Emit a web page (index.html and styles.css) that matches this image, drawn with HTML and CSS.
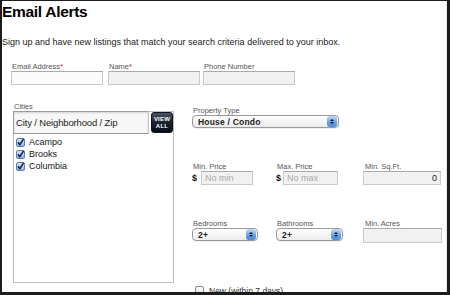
FILE: index.html
```html
<!DOCTYPE html>
<html>
<head>
<meta charset="utf-8">
<link rel="stylesheet" href="styles.css">
</head>
<body>
<div class="frame">
  <h1 class="title">Email Alerts</h1>
  <p class="intro">Sign up and have new listings that match your search criteria delivered to your inbox.</p>

  <div class="contact">
    <div class="field">
      <label class="lbl">Email Address<span class="req">*</span></label>
      <div class="input input-white"></div>
    </div>
    <div class="field">
      <label class="lbl">Name<span class="req">*</span></label>
      <div class="input"></div>
    </div>
    <div class="field">
      <label class="lbl">Phone Number</label>
      <div class="input"></div>
    </div>
  </div>

  <div class="search">
    <div class="cities">
      <label class="lbl">Cities</label>
      <div class="citybox">
        <div class="cityrow">
          <div class="cityinput">City / Neighborhood / Zip</div>
          <div class="viewall"><span>VIEW</span><span>ALL</span></div>
        </div>
        <ul class="citylist">
          <li><svg class="cb" viewBox="0 0 9 9"><defs><linearGradient id="g1" x1="0" y1="0" x2="0" y2="1"><stop offset="0" stop-color="#dbe8f8"/><stop offset="1" stop-color="#8fb3e3"/></linearGradient></defs><rect x="0.5" y="0.5" width="8" height="8" rx="1.5" fill="url(#g1)" stroke="#5d7fb3"/><path d="M2 4.3 L3.8 6.6 L7.6 0.8" fill="none" stroke="#14213a" stroke-width="1.5"/></svg>Acampo</li>
          <li><svg class="cb" viewBox="0 0 9 9"><rect x="0.5" y="0.5" width="8" height="8" rx="1.5" fill="url(#g1)" stroke="#5d7fb3"/><path d="M2 4.3 L3.8 6.6 L7.6 0.8" fill="none" stroke="#14213a" stroke-width="1.5"/></svg>Brooks</li>
          <li><svg class="cb" viewBox="0 0 9 9"><rect x="0.5" y="0.5" width="8" height="8" rx="1.5" fill="url(#g1)" stroke="#5d7fb3"/><path d="M2 4.3 L3.8 6.6 L7.6 0.8" fill="none" stroke="#14213a" stroke-width="1.5"/></svg>Columbia</li>
        </ul>
      </div>
    </div>

    <div class="filters">
      <div class="grid">
        <div class="field span2">
          <label class="lbl">Property Type</label>
          <div class="select sel-wide"><span class="selval">House / Condo</span><span class="stepper"><i class="up"></i><i class="down"></i></span></div>
        </div>
        <div class="field"></div>

        <div class="field">
          <label class="lbl">Min. Price</label>
          <div class="money"><span class="dollar">$</span><div class="input inp-min"><span class="ph">No min</span></div></div>
        </div>
        <div class="field">
          <label class="lbl">Max. Price</label>
          <div class="money"><span class="dollar">$</span><div class="input inp-max"><span class="ph">No max</span></div></div>
        </div>
        <div class="field">
          <label class="lbl">Min. Sq.Ft.</label>
          <div class="input inp-right"><span class="val">0</span></div>
        </div>

        <div class="field">
          <label class="lbl">Bedrooms</label>
          <div class="select sel-bed"><span class="selval">2+</span><span class="stepper"><i class="up"></i><i class="down"></i></span></div>
        </div>
        <div class="field">
          <label class="lbl">Bathrooms</label>
          <div class="select sel-bath"><span class="selval">2+</span><span class="stepper"><i class="up"></i><i class="down"></i></span></div>
        </div>
        <div class="field">
          <label class="lbl">Min. Acres</label>
          <div class="input inp-acres"></div>
        </div>
      </div>
      <div class="newrow"><span class="cb-empty"></span>New (within 7 days)</div>
    </div>
  </div>
</div>
</body>
</html>
```

FILE: styles.css
```css
* { box-sizing: border-box; }
html, body { margin: 0; padding: 0; background: #fff; }
body { font-family: "Liberation Sans", Arial, sans-serif; color: #111; }

.frame {
  width: 450px;
  height: 295px;
  border-style: solid;
  border-color: #1d1d1d;
  border-width: 1px 3px 3px 2px;
  overflow: hidden;
  position: relative;
  background: #fff;
  box-shadow: inset -1px 0 0 #e6e6e6;
}

.title {
  margin: 2px 0 0 0;
  font-size: 15.5px;
  line-height: 18px;
  font-weight: bold;
  color: #000;
  letter-spacing: -0.3px;
}

.intro {
  margin: 16px 0 0 0;
  font-size: 9px;
  line-height: 11px;
  color: #1a1a1a;
}

.lbl {
  display: block;
  font-size: 7.5px;
  line-height: 8px;
  color: #555;
  padding-left: 1px;
  white-space: nowrap;
}
.req { color: #c0282d; }

.input {
  height: 14px;
  border: 1px solid #c9c9c9;
  border-top-color: #a9a9a9;
  background: #f1f1f1;
  font-size: 9px;
  line-height: 12px;
  padding: 0 3px;
}
.input-white { background: #fbfbfb; }

.contact {
  margin-top: 15px;
  padding-left: 9px;
  display: grid;
  grid-template-columns: 97px 95px 95px;
}
.contact .input { width: 92px; }

.search {
  margin-top: 18px;
  padding-left: 11px;
  display: flex;
  gap: 18px;
}

.cities { width: 161px; flex: none; }

.citybox {
  height: 172px;
  border: 1px solid #bdbdbd;
  background: #fff;
}
.cityrow {
  display: flex;
  align-items: flex-start;
  height: 22px;
}
.cityinput {
  flex: 1;
  height: 23px;
  margin: -1px 0 0 -1px;
  border: 1px solid #9c9c9c;
  border-right-color: #c3c3c3;
  box-shadow: inset 0 1px 2px rgba(0,0,0,0.15);
  background: #f7f7f7;
  font-size: 9.5px;
  letter-spacing: -0.15px;
  line-height: 21px;
  padding-left: 2px;
  color: #1b1b1b;
}
.viewall {
  width: 22px;
  height: 21px;
  margin: 0 0 0 2px;
  border-radius: 3px;
  background: linear-gradient(#4a5463 0%, #1f2735 45%, #070c16 100%);
  border: 1px solid #0d121b;
  color: #fff;
  font-size: 6px;
  font-weight: bold;
  line-height: 7px;
  display: flex;
  flex-direction: column;
  align-items: center;
  justify-content: center;
  letter-spacing: 0.2px;
}

.citylist {
  list-style: none;
  margin: 2px 0 0 0;
  padding: 0 0 0 2px;
}
.citylist li {
  display: flex;
  align-items: center;
  gap: 4px;
  height: 12px;
  font-size: 9px;
  color: #151515;
}
.cb { width: 9px; height: 9px; flex: none; }

.filters { padding-top: 4px; width: 250px; }
.grid {
  display: grid;
  grid-template-columns: 84px 88px 78px;
  row-gap: 35px;
}
.span2 { grid-column: span 2; }

.select {
  position: relative;
  height: 13px;
  border: 1px solid #9a9a9a;
  border-radius: 4px;
  background: linear-gradient(#ffffff, #ececec);
  box-shadow: 0 1px 0 rgba(0,0,0,0.06);
  display: flex;
  align-items: center;
  padding-left: 5px;
}
.sel-wide { width: 147px; }
.sel-bed { width: 66px; }
.sel-bath { width: 67px; }
.selval {
  flex: 1;
  font-size: 8.5px;
  font-weight: bold;
  letter-spacing: 0.2px;
  color: #222;
}
.stepper {
  width: 10px;
  height: 11px;
  margin-right: 1px;
  border-radius: 3px;
  background: linear-gradient(#c2dcf8, #6aa3e6 55%, #4b88d6);
  display: flex;
  flex-direction: column;
  align-items: center;
  justify-content: center;
  gap: 1px;
}
.stepper i { display: block; width: 0; height: 0; border-left: 2px solid transparent; border-right: 2px solid transparent; }
.stepper .up { border-bottom: 2px solid #111; }
.stepper .down { border-top: 2px solid #111; }

.money { display: flex; align-items: center; }
.dollar {
  width: 9px;
  font-size: 9px;
  font-weight: bold;
  color: #111;
}
.inp-min { width: 52px; }
.inp-max { width: 55px; margin-left: -2px; }
.ph { color: #a8a8a8; }
.inp-right { width: 78px; margin-left: -1px; text-align: right; padding-right: 3px; }
.val { color: #222; }
.inp-acres { width: 79px; height: 15px; margin-left: -1px; }

.newrow {
  margin-top: 43px;
  padding-left: 3px;
  display: flex;
  align-items: center;
  gap: 5px;
  font-size: 8.5px;
  color: #333;
  height: 9px;
}
.cb-empty {
  width: 9px;
  height: 9px;
  border: 1px solid #8a8a8a;
  border-radius: 2px;
  background: linear-gradient(#fff, #e4e4e4);
}
```
